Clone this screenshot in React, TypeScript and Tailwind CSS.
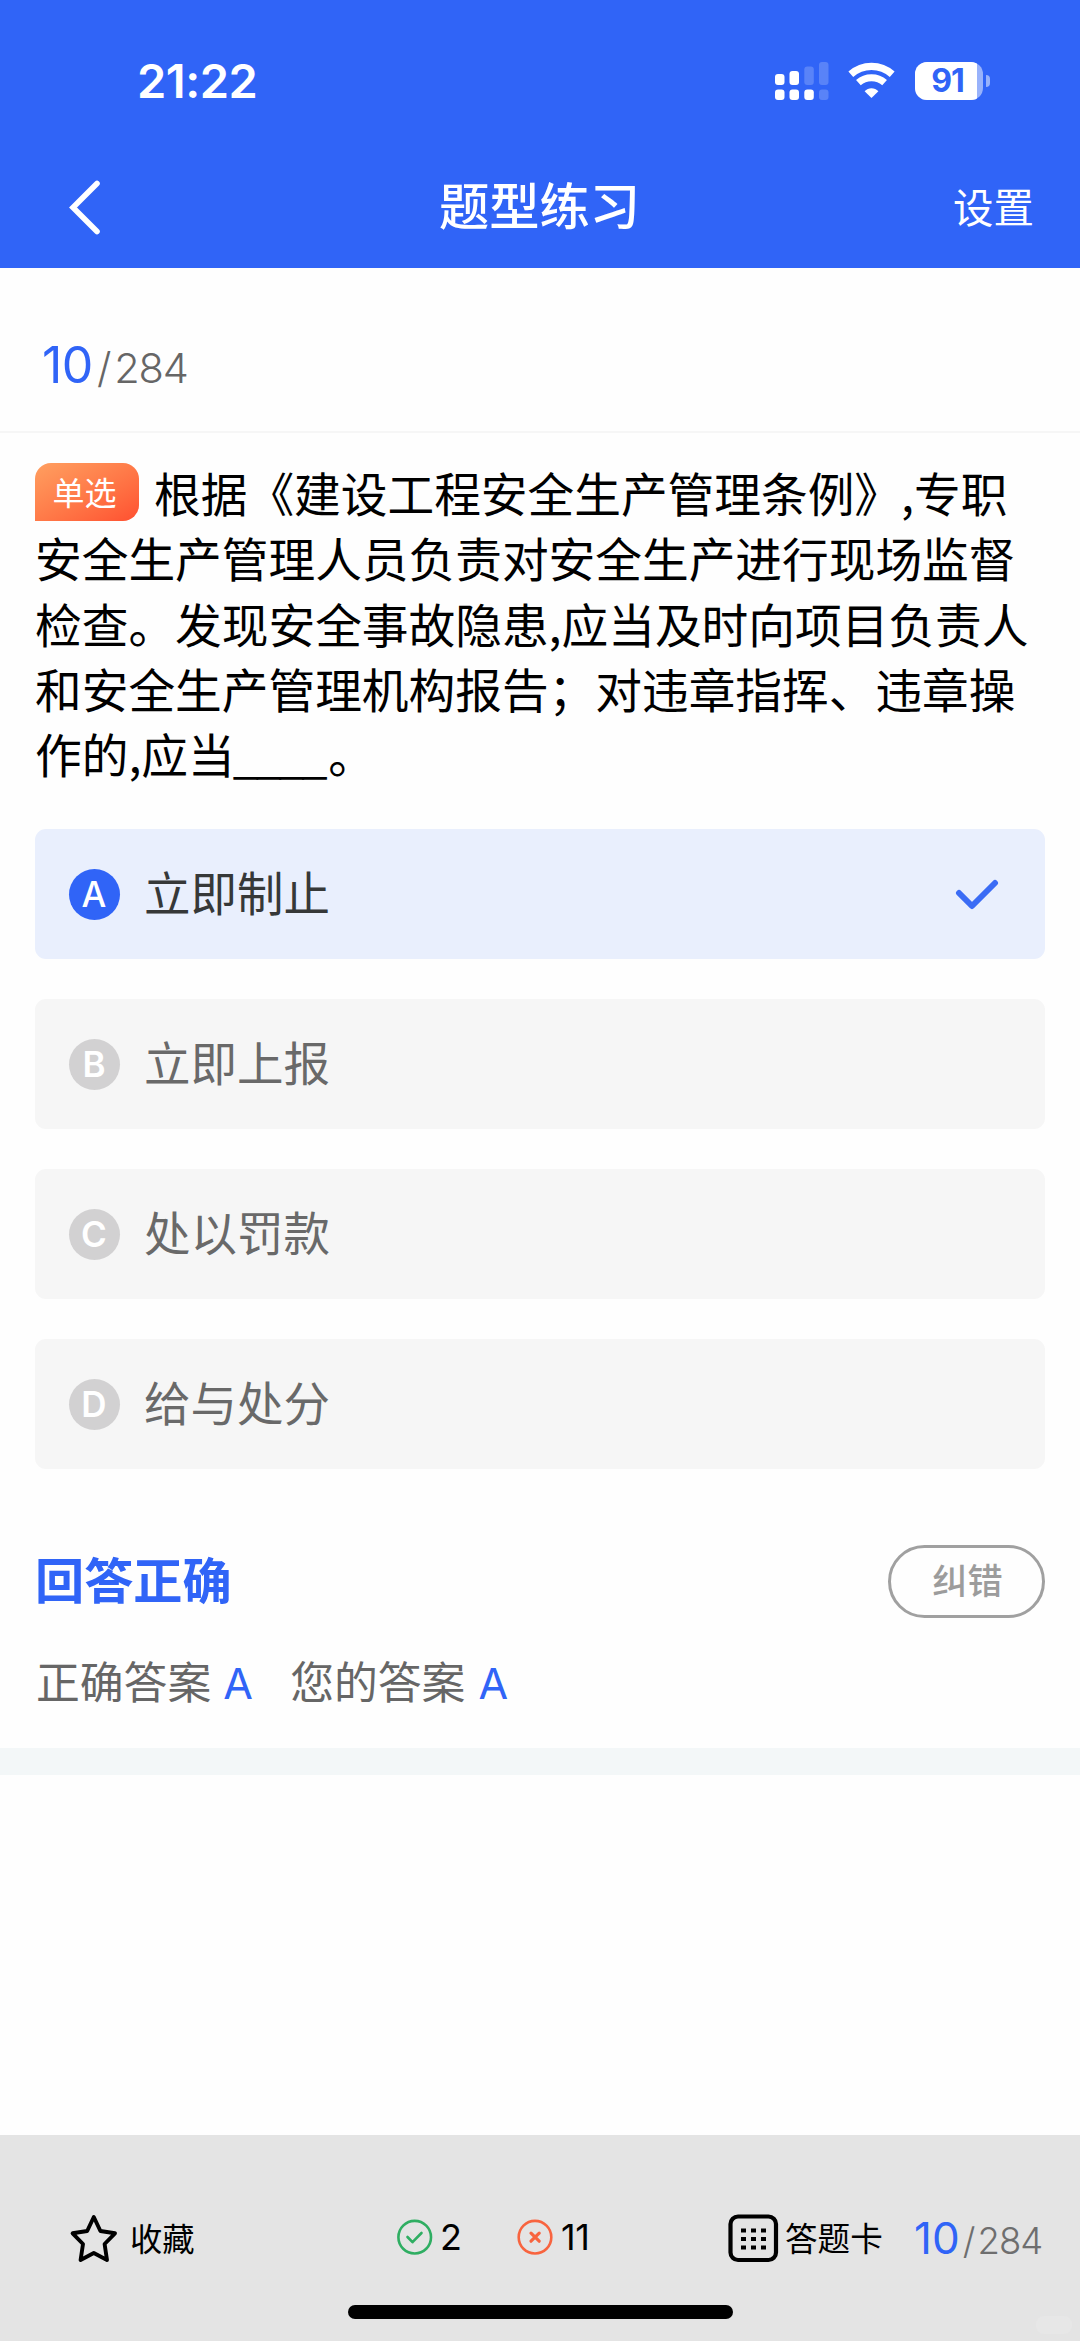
import clsx from "clsx";

const questionLines = [
  "安全生产管理人员负责对安全生产进行现场监督",
  "检查。发现安全事故隐患,应当及时向项目负责人",
  "和安全生产管理机构报告；对违章指挥、违章操",
];

const options = [
  { key: "A", text: "立即制止" },
  { key: "B", text: "立即上报" },
  { key: "C", text: "处以罚款" },
  { key: "D", text: "给与处分" },
];

const StatusBar = () => (
  <div className="flex h-[148px] items-start justify-between pl-[137px] pr-[90px] pt-[60px]">
    <div className="font-['Inter'] text-[47px] font-semibold leading-[41px] tracking-[-0.5px] whitespace-nowrap">21:22</div>
    <div className="flex items-center">
      <svg className="mt-px h-[40px] w-[56px]" viewBox="0 0 56 40" fill="#fff">
        <rect x="1" y="13" width="9.5" height="11" rx="3" />
        <rect x="15.5" y="10" width="9.5" height="14" rx="3" />
        <rect x="30.3" y="5.5" width="9.5" height="18.5" rx="3" opacity="0.2" />
        <rect x="45" y="1" width="9.5" height="23" rx="3" opacity="0.2" />
        <rect x="1" y="28.5" width="9.5" height="10.5" rx="3" />
        <rect x="15.5" y="28.5" width="9.5" height="10.5" rx="3" />
        <rect x="30.3" y="28.5" width="9.5" height="10.5" rx="3" />
        <rect x="45" y="28.5" width="9.5" height="10.5" rx="3" opacity="0.2" />
      </svg>
      <svg className="ml-[17px] h-[40px] w-[50px]" viewBox="0 0 50 40" fill="none" stroke="#fff">
        <path d="M3.8 13.3A31 31 0 0 1 45.2 13.3" strokeWidth="7.2" />
        <path d="M11.4 21.7A19.5 19.5 0 0 1 37.6 21.7" strokeWidth="7" />
        <path d="M24.5 37L17.6 30.2C21.4 26.2 27.6 26.2 31.4 30.2Z" fill="#fff" stroke="none" />
      </svg>
      <div className="ml-[18px] mt-px flex items-center">
        <div className="relative flex h-[38px] w-[68px] items-center justify-center overflow-hidden rounded-[12px] bg-white/50">
          <div className="absolute inset-y-0 left-0 w-[62px] bg-white" />
          <span className="relative mr-[3px] font-['Inter'] text-[32px] font-bold leading-[38px] tracking-[-1px] text-[#3064f7]">91</span>
        </div>
        <div className="ml-[3px] h-[12px] w-[4px] rounded-r-full bg-white/50" />
      </div>
    </div>
  </div>
);

const Header = () => (
  <header className="h-[268px] bg-[#3064f7] text-white">
    <StatusBar />
    <div className="grid h-[120px] grid-cols-3 items-center pl-[68px] pr-[46px]">
      <svg className="h-[60px] w-[36px]" viewBox="0 0 36 60" fill="none" stroke="#fff" strokeWidth="5.6" strokeLinecap="round" strokeLinejoin="miter">
        <path d="M29 5.5L5 29.5L29 53.5" />
      </svg>
      <h1 className="-mt-[10px] ml-[-23px] text-center text-[50.3px] font-medium leading-[60px]">题型练习</h1>
      <div className="-mt-[4px] text-right text-[40.5px] leading-[50px]">设置</div>
    </div>
  </header>
);

const OptionRow = ({ label, text, checked }: { label: string; text: string; checked: boolean }) => (
  <div className={clsx("flex h-[130px] items-center rounded-[11px] pl-[34px] pr-[46px]", checked ? "bg-[#e9effd]" : "bg-[#f6f6f6]")}>
    <div
      className={clsx(
        "flex size-[51px] items-center justify-center rounded-full pr-px font-['Inter'] text-[35px] leading-none text-white",
        checked ? "bg-[#3064f7] font-medium" : "bg-[#d2d1d2] font-semibold"
      )}
    >
      {label}
    </div>
    <span className={clsx("-mt-[6px] ml-[24px] text-[46.5px] leading-[60px]", checked ? "text-[#363838]" : "text-[#696969]")}>{text}</span>
    {checked && (
      <svg className="ml-auto h-[34px] w-[44px]" viewBox="0 0 44 34" fill="none" stroke="#3b6cf5" strokeWidth="6" strokeLinecap="round" strokeLinejoin="round">
        <path d="M4 16L17 29L40 6" />
      </svg>
    )}
  </div>
);

const BottomBar = () => (
  <footer className="relative flex h-[206px] items-start bg-[#e4e4e4] pl-[68px] pt-[75px]">
    <svg className="h-[56px] w-[51px]" viewBox="0 0 51 56" fill="none" stroke="#000" strokeWidth="3.9" strokeLinejoin="round">
      <path d="M25.8 7L32.4 21L47 23.3L36.6 34L39 50L25.8 43L12.6 50L15 34L4.6 23.3L19.2 21Z" />
    </svg>
    <span className="ml-[11px] w-[266px] text-[32.3px] leading-[54px]">收藏</span>
    <svg className="mt-[9px] h-[38px] w-[38px]" viewBox="0 0 38 38" fill="none" stroke="#2fae62" strokeWidth="2.6" strokeLinecap="round" strokeLinejoin="round">
      <circle cx="18.7" cy="18.2" r="16.3" />
      <path d="M11.5 18L16.5 23.2L25.5 14" />
    </svg>
    <span className="ml-[6px] w-[75px] font-['Inter'] text-[36px] leading-[55px]">2</span>
    <svg className="mt-[9px] h-[38px] w-[38px]" viewBox="0 0 38 38" fill="none" stroke="#f8643f" strokeWidth="2.6" strokeLinecap="round">
      <circle cx="20" cy="18.2" r="16.3" />
      <path d="M16 14.2L24.2 22.2M24.2 14.2L16 22.2" strokeWidth="3.2" />
    </svg>
    <span className="ml-[8px] w-[165px] font-['Inter'] text-[36px] leading-[55px] tracking-[-0.5px]">11</span>
    <svg className="h-[56px] w-[54px]" viewBox="0 0 54 56" fill="none">
      <rect x="4.5" y="6.5" width="45.5" height="43.5" rx="7.5" stroke="#000" strokeWidth="4.2" />
      <g fill="#000">
        <rect x="15" y="18.5" width="5" height="4" />
        <rect x="25" y="18.5" width="5" height="4" />
        <rect x="35" y="18.5" width="5" height="4" />
        <rect x="15" y="27" width="5" height="4" />
        <rect x="25" y="27" width="5" height="4" />
        <rect x="35" y="27" width="5" height="4" />
        <rect x="15" y="35.5" width="5" height="4" />
        <rect x="25" y="35.5" width="5" height="4" />
        <rect x="35" y="35.5" width="5" height="4" />
      </g>
    </svg>
    <span className="ml-[5px] w-[129px] text-[32.6px] leading-[54px]">答题卡</span>
    <div className="flex items-baseline font-['Inter'] leading-[57px] whitespace-nowrap">
      <span className="text-[44px] text-[#3064f7]">10</span>
      <span className="ml-[3px] text-[36.5px] font-light text-[#6e6e6e]">/</span>
      <span className="ml-[2px] text-[36.5px] font-light tracking-[-0.9px] text-[#6e6e6e]">284</span>
    </div>
    {/* home indicator */}
    <div className="absolute left-[348px] top-[170px] h-[14px] w-[385px] rounded-full bg-black" />
    <div className="absolute left-[1036px] top-[181px] h-[18px] w-[36px] rounded-[8px] bg-[#e7e7e7]" />
  </footer>
);

const App = () => {
  return (
    <div className="flex h-[2341px] w-[1080px] flex-col overflow-hidden bg-[#fefefe] font-['Noto_Sans_CJK_SC',sans-serif] text-black">
      <Header />

      <div className="flex h-[165px] items-baseline border-b-2 border-[#f6f6f6] pl-[42px] pt-[67px] font-['Inter'] leading-[60px]">
        <span className="text-[50px] tracking-[-0.5px] text-[#3064f7]">10</span>
        <span className="ml-[4px] text-[41.5px] font-light text-[#666]">/</span>
        <span className="ml-[3px] text-[41.5px] font-light tracking-[-1.2px] text-[#666]">284</span>
      </div>

      <div className="h-[396px] px-[35px] pt-[26px] text-[46.7px] leading-[65.3px] whitespace-nowrap">
        <div className="flex">
          <div className="mt-[4px] flex h-[58px] w-[104px] items-center justify-center rounded-[16px] rounded-bl-none bg-linear-to-br from-[#ff9f60] to-[#ff4f30] text-[32px] leading-[54px] text-white">
            <span className="-mt-[3px] mr-[5px]">单选</span>
          </div>
          <span className="ml-[15px]">根据《建设工程安全生产管理条例》,专职</span>
        </div>
        {questionLines.map((line) => (
          <div key={line}>{line}</div>
        ))}
        <div>
          作的,应当<span className="-ml-[2px] mr-[4px] tracking-[-3.2px]">____</span>。
        </div>
      </div>

      <div className="flex flex-col gap-[40px] px-[35px]">
        {options.map((option) => (
          <OptionRow key={option.key} label={option.key} text={option.text} checked={option.key === "A"} />
        ))}
      </div>

      <div className="mt-[76px] flex h-[73px] items-center justify-between px-[35px]">
        <span className="-mt-[7px] text-[49.2px] font-bold leading-[60px] text-[#3064f7]">回答正确</span>
        <div className="flex h-[73px] w-[157px] items-center justify-center rounded-full border-3 border-[#a0a0a0]">
          <span className="-mt-[5px] ml-[2px] text-[35.2px] font-medium leading-[50px] text-[#9c9c9c]">纠错</span>
        </div>
      </div>

      <div className="mt-[32px] flex h-[98px] items-baseline px-[36px] text-[43.8px] leading-[60px] text-[#666]">
        <span>正确答案</span>
        <span className="ml-[12px] w-[67px] font-['Inter'] text-[43px] text-[#3064f7]">A</span>
        <span>您的答案</span>
        <span className="ml-[13px] font-['Inter'] text-[43px] text-[#3064f7]">A</span>
      </div>
      <div className="h-[27px] bg-[#f3f7f8]" />

      <div className="flex-1" />
      <BottomBar />
    </div>
  );
};

export default App;
